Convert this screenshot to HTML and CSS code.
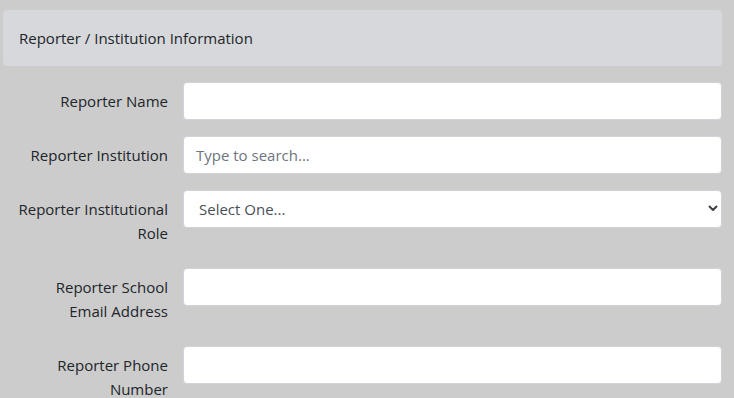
FILE: index.html
```html
<!DOCTYPE html>
<html lang="en">
<head>
    <meta charset="UTF-8">
    <meta name="viewport" content="width=device-width, initial-scale=1.0">
    <title>Reporter Information</title>
    <link rel="stylesheet" href="styles.css">
</head>
<body>

<div class="section">
    <div class="section-header">Reporter / Institution Information</div>

    <div class="form-row">
        <label class="form-label" for="reporterName">Reporter Name</label>
        <input class="form-control" type="text" id="reporterName">
    </div>

    <div class="form-row">
        <label class="form-label" for="reporterInstitution">Reporter Institution</label>
        <input class="form-control" type="text" id="reporterInstitution" placeholder="Type to search...">
    </div>

    <div class="form-row">
        <label class="form-label" for="reporterRole">Reporter Institutional Role</label>
        <div class="select-wrap">
            <select class="form-control form-select" id="reporterRole">
                <option>Select One...</option>
            </select>
            <svg class="select-arrow" width="10" height="7" viewBox="0 0 10 7">
                <path d="M1.5 1.5 L5 5 L8.5 1.5" fill="none" stroke="#3c4147" stroke-width="2" stroke-linecap="round" stroke-linejoin="round"/>
            </svg>
        </div>
    </div>

    <div class="form-row">
        <label class="form-label" for="reporterEmail">Reporter School Email Address</label>
        <input class="form-control" type="email" id="reporterEmail">
    </div>

    <div class="form-row">
        <label class="form-label" for="reporterPhone">Reporter Phone Number</label>
        <input class="form-control" type="tel" id="reporterPhone">
    </div>
</div>

</body>
</html>
```

FILE: styles.css
```css
body {
    margin: 0;
    background: #cccccc;
    font-family: "Open Sans", "Noto Sans", Arial, sans-serif;
    font-size: 15px;
    line-height: 24px;
    color: #212529;
}

.section {
    width: 719px;
    margin-left: 3px;
    padding-top: 10px;
}

.section-header {
    background-color: #d6d8db;
    border-radius: 4px;
    padding: 16px 16px;
    margin-bottom: 16px;
}

.form-row {
    display: grid;
    grid-template-columns: 165px 1fr;
    column-gap: 15px;
    margin-bottom: 16px;
    align-items: start;
}

.form-label {
    text-align: right;
    padding: 7px 0 7px 15px;
}

.form-control {
    box-sizing: border-box;
    width: 100%;
    height: 38px;
    padding: 6px 12px;
    font-family: inherit;
    font-size: 15px;
    line-height: 24px;
    color: #495057;
    background-color: #fff;
    border: 1px solid #ced4da;
    border-radius: 4px;
    margin: 0;
}

.form-control::placeholder {
    color: #6c757d;
}

.select-wrap {
    position: relative;
}

.form-select {
    appearance: none;
    -webkit-appearance: none;
    padding-left: 15px;
}

.select-arrow {
    position: absolute;
    right: 4px;
    top: 15px;
    pointer-events: none;
}
```
